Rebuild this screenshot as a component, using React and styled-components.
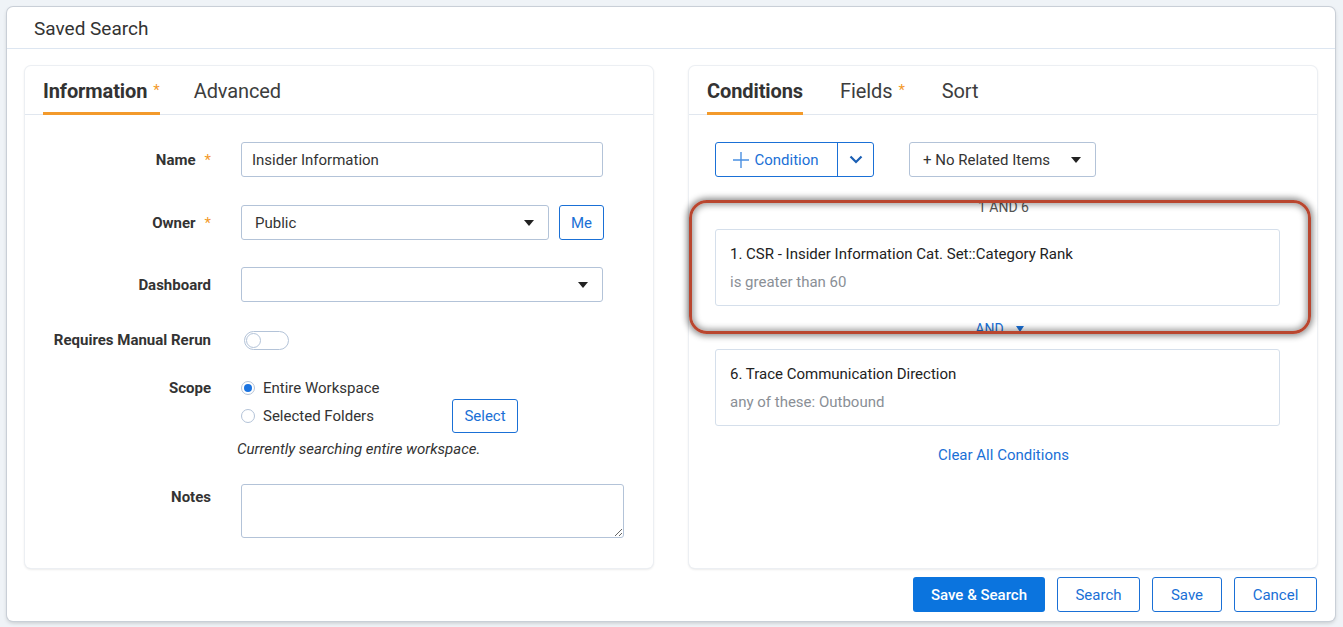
import React from "react";
import styled, { createGlobalStyle } from "styled-components";

const Global = createGlobalStyle`
  html, body { margin: 0; padding: 0; }
  body {
    background: #eff3f7;
    font-family: Roboto, "Liberation Sans", Arial, sans-serif;
    color: #333;
  }
  * { box-sizing: border-box; }
`;

const BLUE = "#1a70d6";
const BORDER = "#b3c3d8";

const Page = styled.div`
  width: 1343px;
  height: 627px;
  padding: 7px 8px 6px 7px;
`;

const Modal = styled.div`
  width: 1328px;
  height: 614px;
  background: #fff;
  border-radius: 6px;
  box-shadow: 0 0 0 1px #c9cfd7, 0 2px 4px rgba(0, 0, 0, 0.18);
  display: flex;
  flex-direction: column;
`;

const Header = styled.div`
  height: 42px;
  padding-left: 27px;
  padding-top: 2px;
  display: flex;
  align-items: center;
  font-size: 19px;
  color: #333;
  border-bottom: 1px solid #dde6f1;
`;

const Body = styled.div`
  display: grid;
  grid-template-columns: 628px 628px;
  gap: 36px;
  padding: 17px 18px 0 18px;
`;

const Card = styled.div`
  position: relative;
  height: 502px;
  background: #fff;
  border-radius: 6px;
  box-shadow: 0 0 0 1px #eceff3, 0 1px 3px rgba(0, 0, 0, 0.16);
`;

const TabBar = styled.div`
  height: 49px;
  display: flex;
  align-items: stretch;
  gap: ${(p) => p.$gap || 36}px;
  padding-left: 18px;
  border-bottom: 1px solid #e1e7ef;
`;

const Tab = styled.div`
  display: flex;
  align-items: center;
  font-size: 20px;
  font-weight: ${(p) => (p.$active ? 700 : 400)};
  color: ${(p) => (p.$active ? "#333" : "#3d3d3d")};
  border-bottom: 3px solid ${(p) => (p.$active ? "#f39a2b" : "transparent")};
  padding-top: 3px;
  margin-bottom: -1px;
  letter-spacing: -0.1px;
`;

const Star = styled.span`
  color: #f39a2b;
  font-size: 15px;
  font-weight: 400;
  margin-left: 6px;
  align-self: center;
  position: relative;
  top: -1px;
`;

const Form = styled.div`
  padding-top: 27px;
  display: flex;
  flex-direction: column;
`;

const Row = styled.div`
  display: grid;
  grid-template-columns: 186px auto;
  column-gap: 30px;
  align-items: ${(p) => p.$align || "center"};
  margin-top: ${(p) => p.$mt || 0}px;
`;

const Label = styled.div`
  text-align: right;
  font-size: 15px;
  font-weight: 700;
  color: #333;
  line-height: 20px;
  padding-top: ${(p) => p.$pt || 0}px;
`;

const ReqStar = styled.span`
  color: #f39a2b;
  font-weight: 400;
  margin-left: 9px;
`;

const Input = styled.div`
  width: ${(p) => p.$w}px;
  height: 35px;
  border: 1px solid ${BORDER};
  border-radius: 3px;
  display: flex;
  align-items: center;
  padding: 0 ${(p) => p.$pr || 10}px 0 ${(p) => p.$pl || 10}px;
  font-size: 15px;
  color: #333;
`;

const Caret = styled.span`
  margin-left: auto;
  width: 0;
  height: 0;
  border-left: 5px solid transparent;
  border-right: 5px solid transparent;
  border-top: 6px solid #222;
`;

const Inline = styled.div`
  display: flex;
  align-items: center;
  gap: ${(p) => p.$gap || 10}px;
`;

const OutlineButton = styled.button`
  height: ${(p) => p.$h || 34}px;
  width: ${(p) => p.$w}px;
  border: 1px solid ${BLUE};
  border-radius: 3px;
  background: #fff;
  color: ${BLUE};
  font-family: inherit;
  font-size: 15px;
  padding: 0;
  display: flex;
  align-items: center;
  justify-content: center;
`;

const Toggle = styled.div`
  width: 45px;
  height: 19px;
  border: 1px solid ${BORDER};
  border-radius: 10px;
  margin-left: 3px;
  display: flex;
  align-items: center;
  padding-left: 1px;
`;

const Knob = styled.div`
  width: 15px;
  height: 15px;
  border-radius: 50%;
  border: 1px solid ${BORDER};
  background: #fff;
`;

const ScopeBox = styled.div`
  display: flex;
  flex-direction: column;
`;

const RadioRow = styled.label`
  display: flex;
  align-items: center;
  height: ${(p) => p.$h || 20}px;
  font-size: 15px;
  color: #333;
`;

const RadioText = styled.span`
  width: ${(p) => p.$w || "auto"};
  margin-left: 8px;
`;

const Radio = styled.span`
  width: 14px;
  height: 14px;
  border-radius: 50%;
  border: 1px solid ${BORDER};
  display: flex;
  align-items: center;
  justify-content: center;
  &::after {
    content: "";
    width: 8px;
    height: 8px;
    border-radius: 50%;
    background: ${(p) => (p.$checked ? "#1a73e0" : "transparent")};
  }
`;

const Hint = styled.div`
  font-size: 15px;
  font-style: italic;
  color: #333;
  margin: 5px 0 0 -4px;
  line-height: 20px;
`;

const Textarea = styled.textarea`
  width: 383px;
  height: 54px;
  border: 1px solid ${BORDER};
  border-radius: 3px;
  font-family: inherit;
  resize: both;
  display: block;
`;

const Right = styled.div`
  padding: 27px 37px 0 26px;
`;

const Toolbar = styled.div`
  display: flex;
  align-items: center;
  gap: 35px;
`;

const Split = styled.div`
  display: flex;
  height: 35px;
  border: 1px solid ${BLUE};
  border-radius: 3px;
`;

const SplitMain = styled.div`
  width: 122px;
  display: flex;
  align-items: center;
  justify-content: center;
  gap: 4px;
  color: ${BLUE};
  font-size: 15px;
  border-right: 1px solid ${BLUE};
  padding-right: 2px;
`;

const SplitArrow = styled.div`
  width: 35px;
  display: flex;
  align-items: center;
  justify-content: center;
`;

const Logic = styled.div`
  text-align: center;
  font-size: 14px;
  color: #555;
  margin-top: 23px;
  line-height: 14px;
  padding-left: 12px;
`;

const CondCard = styled.div`
  height: 77px;
  border: 1px solid #d5dfeb;
  border-radius: 3px;
  padding: 14px 14px 0 14px;
  margin-top: ${(p) => p.$mt || 0}px;
`;

const CondTitle = styled.div`
  font-size: 15px;
  color: #222;
  line-height: 20px;
`;

const CondSub = styled.div`
  font-size: 15px;
  color: #8a8f96;
  line-height: 20px;
  margin-top: 8px;
`;

const AndRow = styled.div`
  display: flex;
  justify-content: center;
  align-items: center;
  gap: 12px;
  height: 43px;
  color: ${BLUE};
  font-size: 14px;
  padding-left: 4px;
  padding-top: 2px;
`;

const SmallCaret = styled.span`
  width: 0;
  height: 0;
  border-left: 4px solid transparent;
  border-right: 4px solid transparent;
  border-top: 6px solid ${BLUE};
`;

const ClearLink = styled.div`
  text-align: center;
  color: ${BLUE};
  font-size: 15px;
  margin-top: 20px;
  padding-left: 12px;
`;

const Annotation = styled.div`
  position: absolute;
  left: 0;
  top: 134px;
  width: 622px;
  height: 134px;
  border: 3px solid #b9462f;
  border-radius: 18px;
  box-shadow: 0 0 6px 2px rgba(0, 0, 0, 0.45), inset 0 0 6px 2px rgba(0, 0, 0, 0.38);
  pointer-events: none;
`;

const Footer = styled.div`
  display: flex;
  justify-content: flex-end;
  gap: 12px;
  padding: 9px 18px 0 0;
`;

const PrimaryButton = styled.button`
  height: 35px;
  width: 132px;
  border: none;
  border-radius: 3px;
  background: #0b74de;
  color: #fff;
  font-family: inherit;
  font-size: 15px;
  font-weight: 500;
`;

export default function App() {
  return (
    <Page>
      <Global />
      <Modal>
        <Header>Saved Search</Header>
        <Body>
          <Card>
            <TabBar $gap={34}>
              <Tab $active>
                Information<Star>*</Star>
              </Tab>
              <Tab>Advanced</Tab>
            </TabBar>
            <Form>
              <Row>
                <Label>
                  Name<ReqStar>*</ReqStar>
                </Label>
                <Input $w={362}>Insider Information</Input>
              </Row>
              <Row $mt={28}>
                <Label>
                  Owner<ReqStar>*</ReqStar>
                </Label>
                <Inline $gap={10}>
                  <Input $w={308} $pl={13} $pr={14}>
                    Public
                    <Caret />
                  </Input>
                  <OutlineButton $w={45} $h={35}>
                    Me
                  </OutlineButton>
                </Inline>
              </Row>
              <Row $mt={27}>
                <Label>Dashboard</Label>
                <Input $w={362} $pr={14}>
                  <Caret />
                </Input>
              </Row>
              <Row $mt={28}>
                <Label>Requires Manual Rerun</Label>
                <Toggle>
                  <Knob />
                </Toggle>
              </Row>
              <Row $mt={28} $align="start">
                <Label>Scope</Label>
                <ScopeBox>
                  <RadioRow>
                    <Radio $checked />
                    <RadioText>Entire Workspace</RadioText>
                  </RadioRow>
                  <RadioRow $h={36}>
                    <Radio />
                    <RadioText $w="189px">Selected Folders</RadioText>
                    <OutlineButton $w={66}>Select</OutlineButton>
                  </RadioRow>
                  <Hint>Currently searching entire workspace.</Hint>
                </ScopeBox>
              </Row>
              <Row $mt={25} $align="start">
                <Label $pt={3}>Notes</Label>
                <Textarea />
              </Row>
            </Form>
          </Card>

          <Card>
            <TabBar $gap={37}>
              <Tab $active>Conditions</Tab>
              <Tab>
                Fields<Star>*</Star>
              </Tab>
              <Tab>Sort</Tab>
            </TabBar>
            <Right>
              <Toolbar>
                <Split>
                  <SplitMain>
                    <svg width="18" height="18" viewBox="0 0 18 18">
                      <path d="M9 1v16M1 9h16" stroke="#4a90e2" strokeWidth="1.4" />
                    </svg>
                    Condition
                  </SplitMain>
                  <SplitArrow>
                    <svg width="14" height="9" viewBox="0 0 14 9">
                      <path d="M1.5 1.5L7 7l5.5-5.5" stroke="#1a5fb4" strokeWidth="2.2" fill="none" />
                    </svg>
                  </SplitArrow>
                </Split>
                <Input $w={187} $pl={13} $pr={14}>
                  + No Related Items
                  <Caret />
                </Input>
              </Toolbar>
              <Logic>1 AND 6</Logic>
              <CondCard $mt={15}>
                <CondTitle>1. CSR - Insider Information Cat. Set::Category Rank</CondTitle>
                <CondSub>is greater than 60</CondSub>
              </CondCard>
              <AndRow>
                AND
                <SmallCaret />
              </AndRow>
              <CondCard>
                <CondTitle>6. Trace Communication Direction</CondTitle>
                <CondSub>any of these: Outbound</CondSub>
              </CondCard>
              <ClearLink>Clear All Conditions</ClearLink>
            </Right>
            <Annotation />
          </Card>
        </Body>
        <Footer>
          <PrimaryButton>Save &amp; Search</PrimaryButton>
          <OutlineButton $w={83} $h={35}>Search</OutlineButton>
          <OutlineButton $w={70} $h={35}>Save</OutlineButton>
          <OutlineButton $w={83} $h={35}>Cancel</OutlineButton>
        </Footer>
      </Modal>
    </Page>
  );
}
